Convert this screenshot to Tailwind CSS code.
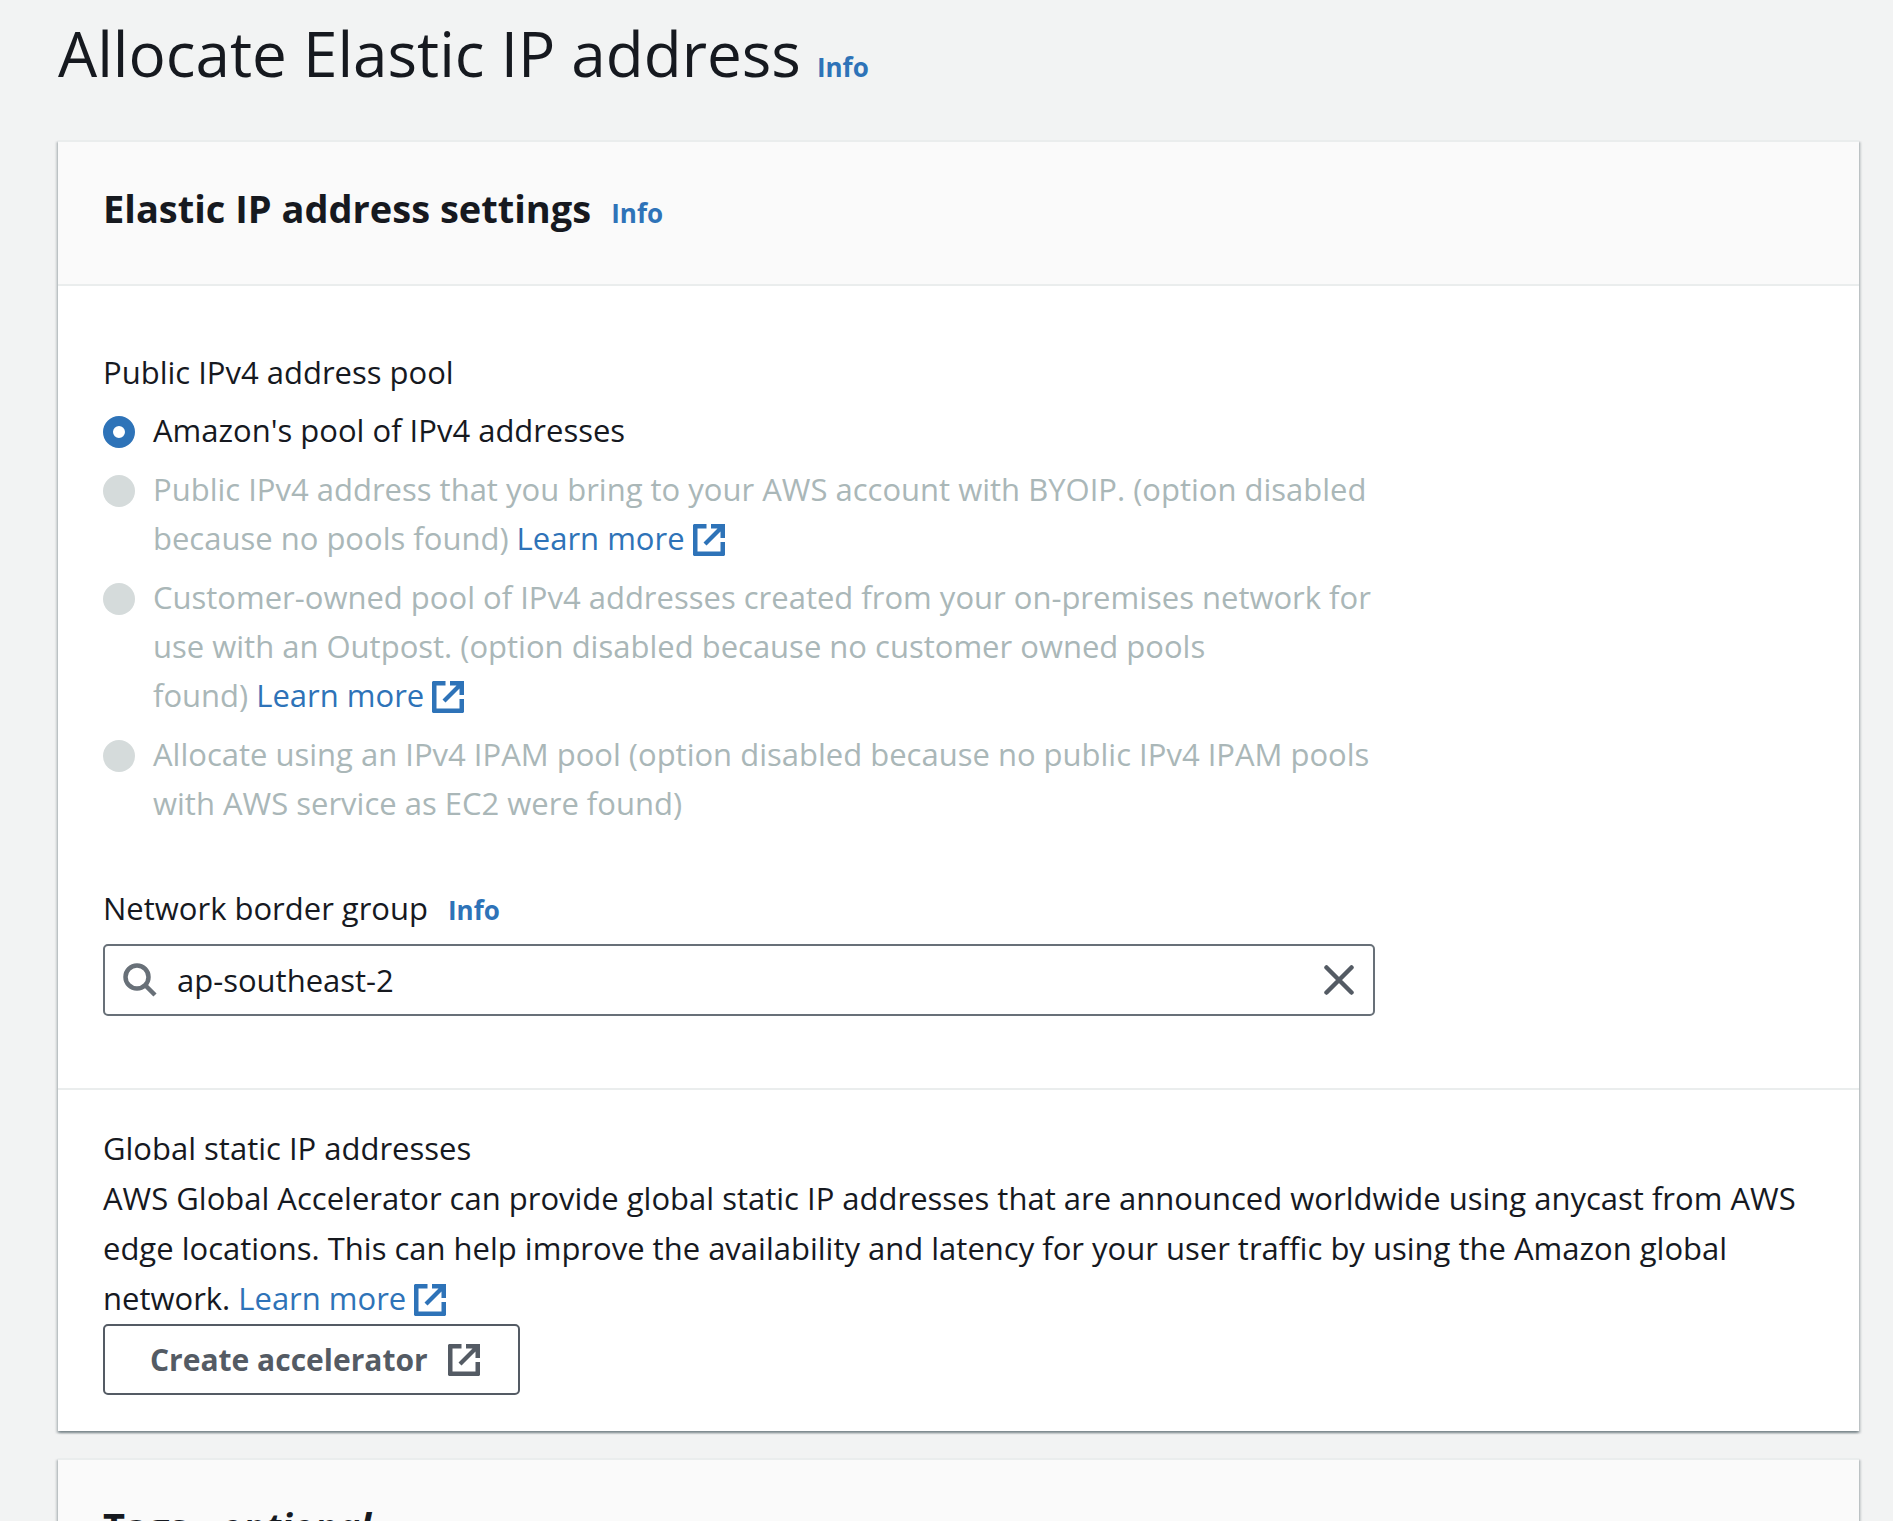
<!DOCTYPE html>
<html lang="en">
<head>
<meta charset="utf-8">
<meta name="viewport" content="width=device-width, initial-scale=1">
<title>Allocate Elastic IP address</title>
<script src="https://cdn.jsdelivr.net/npm/@tailwindcss/browser@4"></script>
</head>
<body class="h-screen overflow-hidden bg-[#f2f3f3] pr-[34px] pl-[58px] font-['Open_Sans','Noto_Sans',sans-serif] text-[31px] leading-[49px] text-[#16191f]">

<svg class="hidden" aria-hidden="true">
  <symbol id="external" viewBox="0 0 32 32">
    <path fill="currentColor" d="M1 0H13.500V4.500H4.500V27.500H27.500V18H32V31L31 32H1L0 31V1Z"/>
    <path fill="currentColor" d="M18 0H32V14H27.500V7.500L13.500 21.500L10.500 18.500L24.500 4.500H18Z"/>
  </symbol>
</svg>

<header class="flex items-baseline gap-4 pt-[13px]">
  <h1 class="text-[62px] leading-[80px]">Allocate Elastic IP address</h1>
  <a href="#" class="text-[26px] leading-[26px] font-bold text-[#2e73b8]">Info</a>
</header>

<main class="mt-[47px] flex flex-col gap-[27px]">
  <section class="border-t-2 border-[#eaeded] bg-white shadow-[0_2px_2px_0_rgba(0,28,36,0.3),2px_2px_2px_0_rgba(0,28,36,0.15),-2px_2px_2px_0_rgba(0,28,36,0.15)]">
    <div class="flex items-baseline gap-5 border-b-2 border-[#eaeded] bg-[#fafafa] px-[45px] pt-[41px] pb-[51px]">
      <h2 class="text-[38px] leading-[50px] font-bold">Elastic IP address settings</h2>
      <a href="#" class="text-[26px] leading-[26px] font-bold text-[#2e73b8]">Info</a>
    </div>

    <form class="px-[45px] pt-[62px] pb-[72px]">
      <fieldset class="max-w-[1272px]">
        <legend class="mb-[9px]">Public IPv4 address pool</legend>
        <div class="flex flex-col gap-[10px]">
          <div class="flex gap-[18px]">
            <input id="pool-amazon" name="pool" type="radio" checked class="mt-[10px] size-8 shrink-0 appearance-none rounded-full border-[10px] border-[#2e73b8] bg-white">
            <label for="pool-amazon">Amazon's pool of IPv4 addresses</label>
          </div>
          <div class="flex gap-[18px] text-[#aab7b8]">
            <input id="pool-byoip" name="pool" type="radio" disabled class="mt-[10px] size-8 shrink-0 appearance-none rounded-full bg-[#d5dbdb]">
            <div><label for="pool-byoip">Public IPv4 address that you bring to your AWS account with BYOIP. (option disabled<br>because no pools found)</label> <a href="#" class="text-[#2e73b8]">Learn more <svg class="inline size-8 align-[-6px]"><use href="#external"/></svg></a></div>
          </div>
          <div class="flex gap-[18px] text-[#aab7b8]">
            <input id="pool-customer" name="pool" type="radio" disabled class="mt-[10px] size-8 shrink-0 appearance-none rounded-full bg-[#d5dbdb]">
            <div><label for="pool-customer">Customer-owned pool of IPv4 addresses created from your on-premises network for<br>use with an Outpost. (option disabled because no customer owned pools<br>found)</label> <a href="#" class="text-[#2e73b8]">Learn more <svg class="inline size-8 align-[-6px]"><use href="#external"/></svg></a></div>
          </div>
          <div class="flex gap-[18px] text-[#aab7b8]">
            <input id="pool-ipam" name="pool" type="radio" disabled class="mt-[10px] size-8 shrink-0 appearance-none rounded-full bg-[#d5dbdb]">
            <label for="pool-ipam">Allocate using an IPv4 IPAM pool (option disabled because no public IPv4 IPAM pools<br>with AWS service as EC2 were found)</label>
          </div>
        </div>
      </fieldset>

      <div class="mt-14 flex items-baseline gap-5">
        <label for="border-group">Network border group</label>
        <a href="#" class="text-[26px] leading-[26px] font-bold text-[#2e73b8]">Info</a>
      </div>
      <div class="mt-[11px] flex h-[72px] max-w-[1272px] items-center rounded-[5px] border-2 border-[#687078] bg-white pr-[19px] pl-[18px]">
        <svg class="size-[34px] shrink-0 text-[#687078]" viewBox="0 0 34 34" fill="none" stroke="currentColor" stroke-width="4.500" aria-hidden="true">
          <circle cx="14" cy="14" r="11.500"/>
          <path d="M22 22L32 32"/>
        </svg>
        <input id="border-group" type="text" value="ap-southeast-2" class="ml-5 min-w-0 flex-1 bg-transparent outline-none">
        <button type="button" aria-label="Clear" class="shrink-0 text-[#545b64]">
          <svg class="block size-[30px]" viewBox="0 0 30 30" fill="none" stroke="currentColor" stroke-width="4.500" stroke-linecap="round"><path d="M2.500 2.500L27.500 27.500M27.500 2.500L2.500 27.500"/></svg>
        </button>
      </div>
    </form>

    <div class="border-t-2 border-[#eaeded] px-[45px] pt-[33px] pb-9">
      <h3 class="leading-[50px]">Global static IP addresses</h3>
      <p class="leading-[50px]">AWS Global Accelerator can provide global static IP addresses that are announced worldwide using anycast from AWS<br>edge locations. This can help improve the availability and latency for your user traffic by using the Amazon global<br>network. <a href="#" class="text-[#2e73b8]">Learn more <svg class="inline size-8 align-[-6px]"><use href="#external"/></svg></a></p>
      <button type="button" class="mt-px flex h-[71px] items-center gap-5 rounded-[5px] border-2 border-[#545b64] bg-white pr-[38px] pl-[45px] text-[30px] font-bold text-[#545b64]">
        Create accelerator
        <svg class="size-8"><use href="#external"/></svg>
      </button>
    </div>
  </section>

  <section class="border-t-2 border-[#eaeded] bg-white shadow-[0_2px_2px_0_rgba(0,28,36,0.3),2px_2px_2px_0_rgba(0,28,36,0.15),-2px_2px_2px_0_rgba(0,28,36,0.15)]">
    <div class="border-b-2 border-[#eaeded] bg-[#fafafa] px-[45px] pt-[41px] pb-[51px]">
      <h2 class="text-[38px] leading-[50px] font-bold">Tags - <i>optional</i></h2>
    </div>
  </section>
</main>
</body>
</html>
